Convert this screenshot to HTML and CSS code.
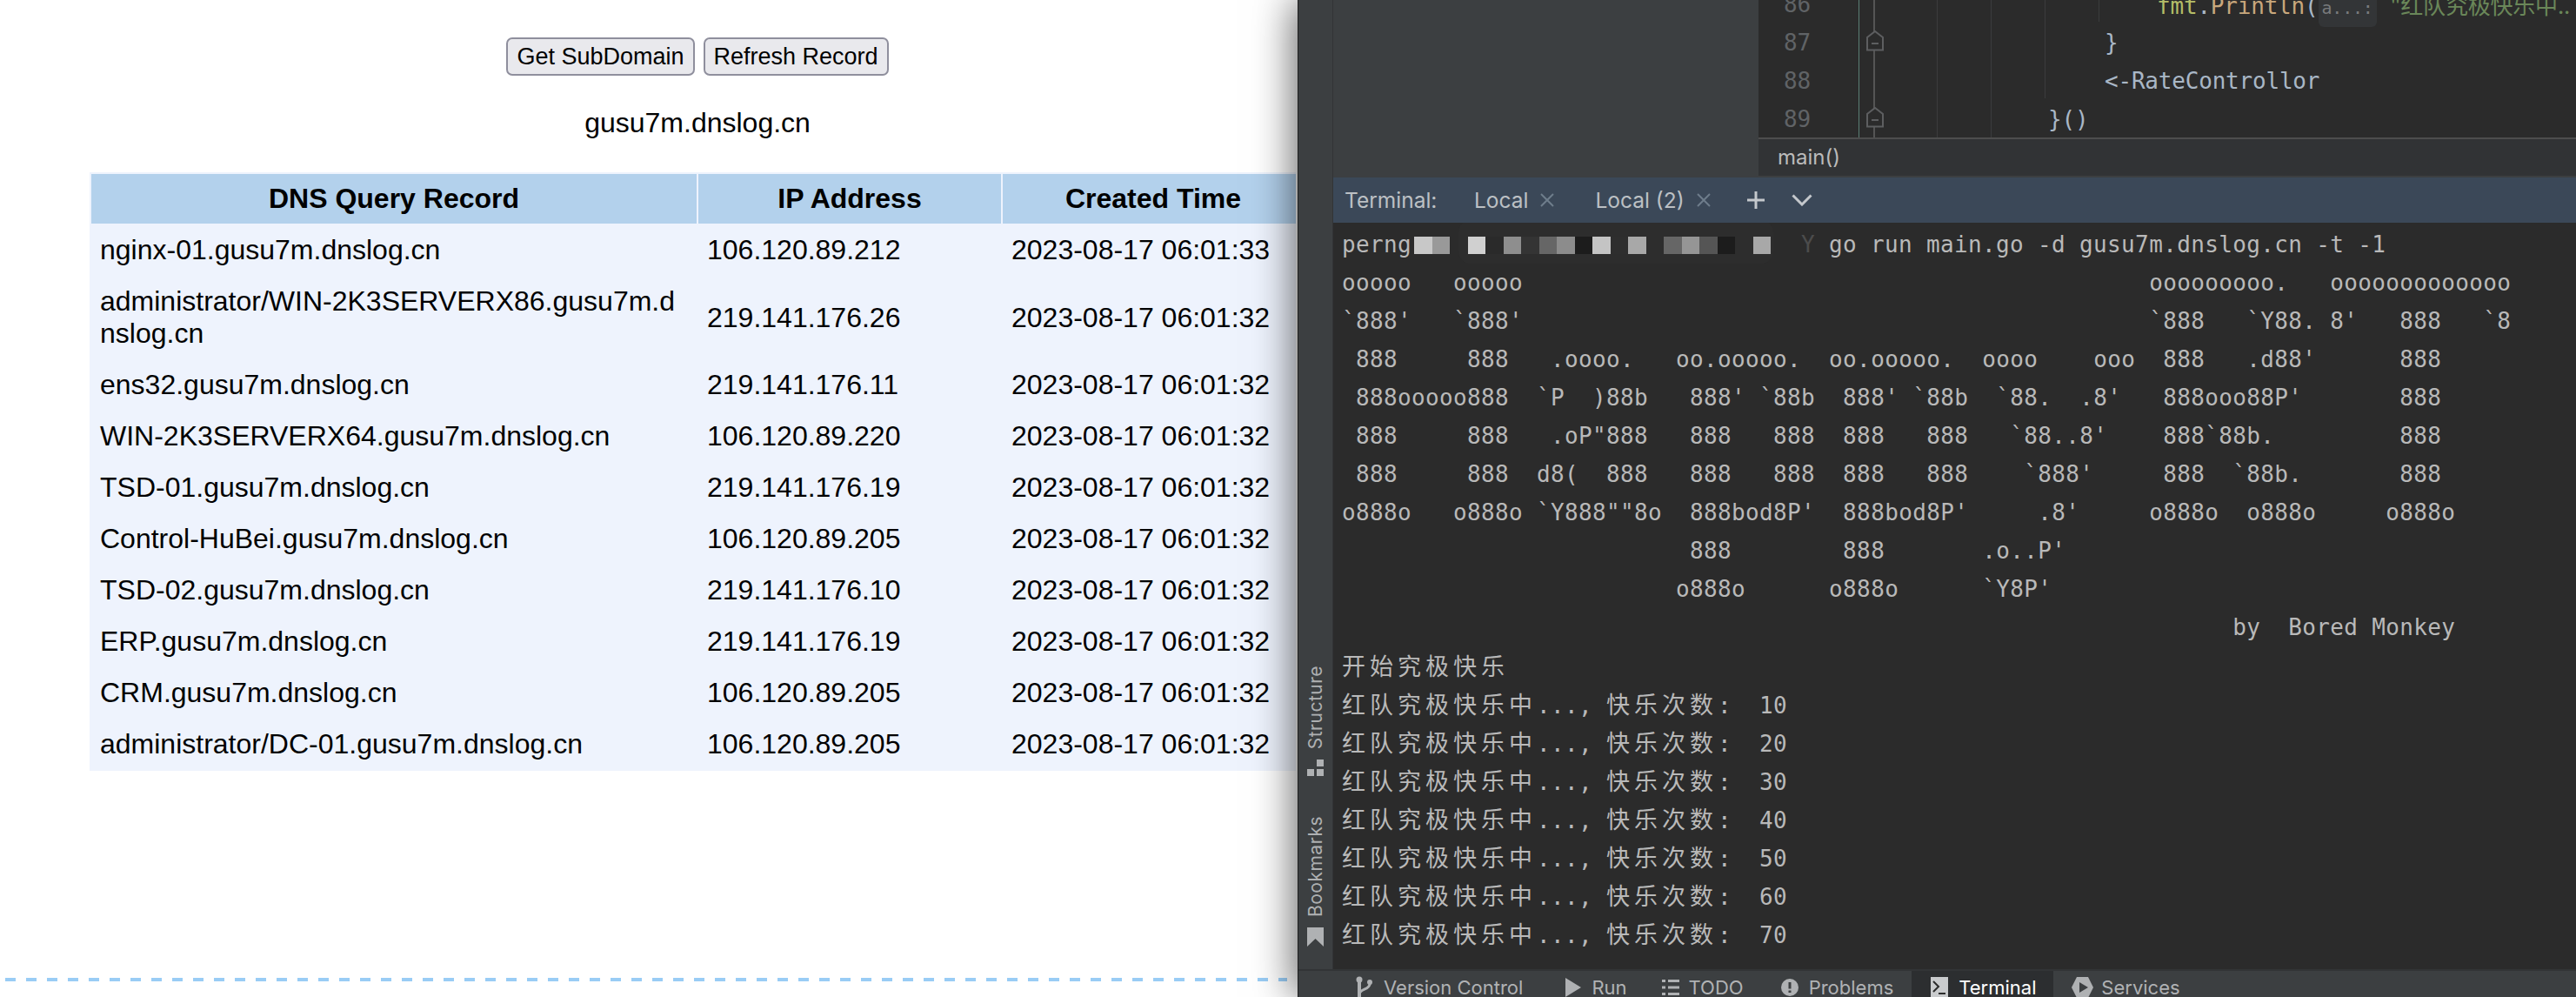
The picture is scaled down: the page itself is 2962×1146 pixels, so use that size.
FILE: index.html
```html
<!DOCTYPE html>
<html lang="en">
<head>
<meta charset="utf-8">
<title>DNSLog</title>
<link rel="stylesheet" href="styles.css">
</head>
<body>
<div class="screen">
  <main class="page">
    <div class="page-inner">
      <div class="actions">
        <button class="btn" type="button">Get SubDomain</button>
        <button class="btn" type="button">Refresh Record</button>
      </div>
      <p class="domain">gusu7m.dnslog.cn</p>
      <table class="records">
        <colgroup><col class="c1"><col class="c2"><col class="c3"></colgroup>
        <thead>
          <tr><th>DNS Query Record</th><th>IP Address</th><th>Created Time</th></tr>
        </thead>
        <tbody>
          <tr><td>nginx-01.gusu7m.dnslog.cn</td><td>106.120.89.212</td><td>2023-08-17 06:01:33</td></tr>
          <tr><td>administrator/WIN-2K3SERVERX86.gusu7m.dnslog.cn</td><td>219.141.176.26</td><td>2023-08-17 06:01:32</td></tr>
          <tr><td>ens32.gusu7m.dnslog.cn</td><td>219.141.176.11</td><td>2023-08-17 06:01:32</td></tr>
          <tr><td>WIN-2K3SERVERX64.gusu7m.dnslog.cn</td><td>106.120.89.220</td><td>2023-08-17 06:01:32</td></tr>
          <tr><td>TSD-01.gusu7m.dnslog.cn</td><td>219.141.176.19</td><td>2023-08-17 06:01:32</td></tr>
          <tr><td>Control-HuBei.gusu7m.dnslog.cn</td><td>106.120.89.205</td><td>2023-08-17 06:01:32</td></tr>
          <tr><td>TSD-02.gusu7m.dnslog.cn</td><td>219.141.176.10</td><td>2023-08-17 06:01:32</td></tr>
          <tr><td>ERP.gusu7m.dnslog.cn</td><td>219.141.176.19</td><td>2023-08-17 06:01:32</td></tr>
          <tr><td>CRM.gusu7m.dnslog.cn</td><td>106.120.89.205</td><td>2023-08-17 06:01:32</td></tr>
          <tr><td>administrator/DC-01.gusu7m.dnslog.cn</td><td>106.120.89.205</td><td>2023-08-17 06:01:32</td></tr>
        </tbody>
      </table>
    </div>
    <div class="dash"></div>
  </main>

  <section class="ide">
    <div class="ide-top">
      <aside class="strip">
        <span class="vlabel">Structure</span>
        <svg class="strip-ico" width="20" height="19" viewBox="0 0 20 19"><rect x="0" y="11" width="8" height="8" fill="#afb1b3"/><rect x="11" y="11" width="8" height="8" fill="#afb1b3"/><rect x="11" y="0" width="8" height="8" fill="#afb1b3"/></svg>
        <span class="vlabel vlabel-gap">Bookmarks</span>
        <svg class="strip-ico" width="20" height="23" viewBox="0 0 20 23"><path d="M0 0H19V22L9.500 13L0 22Z" fill="#afb1b3"/></svg>
      </aside>
      <div class="main">
        <div class="upper">
          <div class="project"></div>
          <div class="editor-col">
            <div class="editor">
              <i class="vcs"></i>
              <i class="fold-line"></i>
              <i class="guide g1"></i>
              <i class="guide g2"></i>
              <i class="guide g3"></i>
              <i class="guide g4"></i>
              <svg class="fold f1" width="20" height="24" viewBox="0 0 20 24"><path d="M1 22.500V8L10 1L19 8V22.500Z" fill="#2b2b2b" stroke="#5d5e60" stroke-width="2"/><path d="M6 15H14" stroke="#5d5e60" stroke-width="2"/></svg>
              <svg class="fold f2" width="20" height="24" viewBox="0 0 20 24"><path d="M1 22.500V8L10 1L19 8V22.500Z" fill="#2b2b2b" stroke="#5d5e60" stroke-width="2"/><path d="M6 15H14" stroke="#5d5e60" stroke-width="2"/></svg>
              <div class="code-line"><span class="ln">86</span><span class="code ind-5"><span class="fn-pkg">fmt</span>.<span class="fn-name">Println</span>(<span class="hint">a...:</span> <span class="str"><span class="cjk-code">"红队究极快乐中..</span></span></span></div>
              <div class="code-line"><span class="ln">87</span><span class="code ind-4">}</span></div>
              <div class="code-line"><span class="ln">88</span><span class="code ind-4">&lt;-RateControllor</span></div>
              <div class="code-line"><span class="ln">89</span><span class="code ind-3">}()</span></div>
            </div>
            <div class="crumb">main()</div>
          </div>
        </div>
        <header class="term-head">
          <span class="term-title">Terminal:</span>
          <span class="tab">Local</span>
          <svg class="x" width="16" height="16" viewBox="0 0 16 16"><path d="M1 1L15 15M15 1L1 15" stroke="#6e7d8b" stroke-width="2"/></svg>
          <span class="tab tab-2">Local (2)</span>
          <svg class="x" width="16" height="16" viewBox="0 0 16 16"><path d="M1 1L15 15M15 1L1 15" stroke="#6e7d8b" stroke-width="2"/></svg>
          <svg class="plus" width="20" height="20" viewBox="0 0 20 20"><path d="M10 0V20M0 10H20" stroke="#c4c8cc" stroke-width="3"/></svg>
          <svg class="chev" width="24" height="14" viewBox="0 0 24 14"><path d="M1.500 1.500L12 12L22.500 1.500" fill="none" stroke="#c4c8cc" stroke-width="3"/></svg>
        </header>
        <div class="terminal">
          <div class="smudge"></div>
          <div class="tline">perng<span class="mask"><i class="m0"></i><i class="m1"></i><i></i><i class="m2"></i><i class="m3"></i><i class="m4"></i><i class="m5"></i><i class="m6"></i><i class="m7"></i><i class="m8"></i><i class="m9"></i><i class="m11"></i><i class="m10"></i><i></i><i class="m6"></i><i class="m13"></i><i class="m14"></i><i class="m8"></i><i></i><i class="m10"></i></span><span class="dim">Y</span> go run main.go -d gusu7m.dnslog.cn -t -1</div>
          <div class="tline">ooooo   ooooo                                             ooooooooo.   ooooooooooooo</div>
          <div class="tline">`888'   `888'                                             `888   `Y88. 8'   888   `8</div>
          <div class="tline"> 888     888   .oooo.   oo.ooooo.  oo.ooooo.  oooo    ooo  888   .d88'      888</div>
          <div class="tline"> 888ooooo888  `P  )88b   888' `88b  888' `88b  `88.  .8'   888ooo88P'       888</div>
          <div class="tline"> 888     888   .oP"888   888   888  888   888   `88..8'    888`88b.         888</div>
          <div class="tline"> 888     888  d8(  888   888   888  888   888    `888'     888  `88b.       888</div>
          <div class="tline">o888o   o888o `Y888""8o  888bod8P'  888bod8P'     .8'     o888o  o888o     o888o</div>
          <div class="tline">                         888        888       .o..P'</div>
          <div class="tline">                        o888o      o888o      `Y8P'</div>
          <div class="tline">                                                                by  Bored Monkey</div>
          <div class="tline"><span class="cjk">开始究极快乐</span></div>
          <div class="tline"><span class="cjk">红队究极快乐中</span>..., <span class="cjk">快乐次数</span>:  10</div>
          <div class="tline"><span class="cjk">红队究极快乐中</span>..., <span class="cjk">快乐次数</span>:  20</div>
          <div class="tline"><span class="cjk">红队究极快乐中</span>..., <span class="cjk">快乐次数</span>:  30</div>
          <div class="tline"><span class="cjk">红队究极快乐中</span>..., <span class="cjk">快乐次数</span>:  40</div>
          <div class="tline"><span class="cjk">红队究极快乐中</span>..., <span class="cjk">快乐次数</span>:  50</div>
          <div class="tline"><span class="cjk">红队究极快乐中</span>..., <span class="cjk">快乐次数</span>:  60</div>
          <div class="tline"><span class="cjk">红队究极快乐中</span>..., <span class="cjk">快乐次数</span>:  70</div>
        </div>
      </div>
    </div>
    <footer class="bar">
      <div class="bar-item i-vc">
        <svg width="20" height="26" viewBox="0 0 20 26"><circle cx="4" cy="4" r="3.500" fill="#afb1b3"/><path d="M4 6V24" stroke="#afb1b3" stroke-width="4"/><circle cx="16" cy="7" r="3" fill="#afb1b3"/><path d="M16 9C16 15 6 15 5 19" fill="none" stroke="#afb1b3" stroke-width="3"/></svg>
        <span>Version Control</span>
      </div>
      <div class="bar-item i-run">
        <svg width="18" height="22" viewBox="0 0 18 22"><path d="M0 0L18 11L0 22Z" fill="#afb1b3"/></svg>
        <span>Run</span>
      </div>
      <div class="bar-item i-todo">
        <svg width="20" height="18" viewBox="0 0 20 18"><path d="M0 1.500H4M7 1.500H20M0 9H4M7 9H20M0 16.500H4M7 16.500H20" stroke="#afb1b3" stroke-width="3"/></svg>
        <span>TODO</span>
      </div>
      <div class="bar-item i-prob">
        <svg width="20" height="20" viewBox="0 0 20 20"><circle cx="10" cy="10" r="10" fill="#afb1b3"/><path d="M10 4V11.500M10 13.500V16" stroke="#3c3f41" stroke-width="3"/></svg>
        <span>Problems</span>
      </div>
      <div class="bar-item i-term active">
        <svg width="20" height="24" viewBox="0 0 20 24"><rect width="20" height="24" fill="#c9cbcd"/><path d="M3 5L9 11L3 17" fill="none" stroke="#2b2b2b" stroke-width="2"/><path d="M9 19H17" stroke="#2b2b2b" stroke-width="2"/></svg>
        <span>Terminal</span>
      </div>
      <div class="bar-item i-serv">
        <svg width="25" height="24" viewBox="0 0 25 24"><path d="M6 0H19L25 12L19 24H6L0 12Z" fill="#afb1b3"/><path d="M9 6L19 12L9 18Z" fill="#3c3f41"/></svg>
        <span>Services</span>
      </div>
    </footer>
  </section>
</div>
</body>
</html>
```

FILE: styles.css
```css
* { box-sizing: border-box; }
html, body { margin: 0; padding: 0; height: 100%; background: #fff; overflow: hidden; }

.screen { display: flex; width: 2962px; height: 1146px; overflow: hidden; }

/* browser page */
.page { position: relative; display: flex; flex-direction: column; width: 1490px; flex: none; overflow: hidden; font-family: "Liberation Sans", Arial, sans-serif; color: #000; }
.page-inner { width: 1604px; padding-top: 43px; display: flex; flex-direction: column; align-items: center; }
.actions { display: flex; gap: 10px; }
.btn { height: 44px; padding: 0 10px; font: 27px "Liberation Sans", Arial, sans-serif; color: #000; background: #e9e9ed; border: 2px solid #8f8f9d; border-radius: 7px; }
.domain { margin: 36px 0 0; font-size: 32px; line-height: 36px; }
.records { margin-top: 39px; width: 1398px; table-layout: fixed; border-collapse: separate; border-spacing: 2px; background: #eef3fd; font-size: 32px; }
.c1 { width: 696px; }
.c2 { width: 348px; }
.c3 { width: 346px; }
.records th { background: #b3d1ec; padding: 10px; font-weight: 700; text-align: center; }
.records td { padding: 10px; word-break: break-all; white-space: normal; }
.records td:nth-child(3) { white-space: nowrap; }
.dash { margin-top: auto; margin-bottom: 18px; margin-left: 6px; width: 1474px; height: 4px; background: repeating-linear-gradient(90deg, #99ccf5 0 12px, transparent 12px 24px); }

/* IDE window */
.ide { position: relative; flex: 1; margin-left: 2px; display: flex; flex-direction: column; background: #3c3f41; border-left: 1px solid #1f1f1f; box-shadow: -4px 0 44px rgba(0, 0, 0, .6); font-family: Inter, "Noto Sans", sans-serif; font-size: 22px; color: #b4b6b8; }
.ide-top { display: flex; height: 1114px; flex: none; }
.strip { width: 40px; flex: none; display: flex; flex-direction: column; align-items: center; justify-content: flex-end; background: #3c3f41; padding-bottom: 25px; border-right: 1px solid #323436; }
.vlabel { writing-mode: vertical-rl; transform: rotate(180deg); font-size: 21px; letter-spacing: .5px; line-height: 24px; color: #aeb0b2; }
.vlabel-gap { margin-top: 46px; }
.strip-ico { margin-top: 12px; display: block; }

.main { flex: 1; min-width: 0; display: flex; flex-direction: column; }
.upper { display: flex; height: 202px; flex: none; }
.project { width: 489px; flex: none; background: #3c3f41; }
.editor-col { flex: 1; display: flex; flex-direction: column; min-width: 0; }
.editor { position: relative; height: 160px; flex: none; background: #2b2b2b; border-bottom: 2px solid #4d4d4d; overflow: hidden; font: 26px/44px "DejaVu Sans Mono", "Noto Sans CJK SC", monospace; letter-spacing: -.2px; color: #a9b7c6; }
.code-line { display: flex; height: 44px; white-space: pre; }
.code-line:first-of-type { margin-top: -17px; }
.ln { width: 398px; flex: none; padding-left: 29px; color: #606366; }
.code { display: block; }
.ind-3 { margin-left: -65px; }
.ind-4 { margin-left: 0; }
.ind-5 { margin-left: 60px; }
.fn-pkg { color: #b5bd68; }
.fn-name { color: #c8a77c; }
.hint { display: inline-block; padding: 0 4px; font-size: 20px; line-height: 44px; color: #787a7c; background: #333537; border-radius: 6px; }
.str { color: #6a8759; }
.cjk-code { font-family: "Noto Sans CJK SC", sans-serif; }
.vcs { position: absolute; left: 115px; top: 0; bottom: 0; width: 1px; background: #5b7e74; }
.fold-line { position: absolute; left: 132px; top: 0; bottom: 0; width: 2px; background: #555; }
.guide { position: absolute; top: 0; width: 1px; background: #3b3c3d; }
.g1 { left: 205px; bottom: 0; }
.g2 { left: 267px; bottom: 0; }
.g3 { left: 329px; height: 113px; }
.g4 { left: 391px; height: 25px; }
.fold { position: absolute; left: 124px; }
.f1 { top: 35px; }
.f2 { top: 123px; }
.crumb { height: 42px; flex: none; padding-left: 22px; background: #313335; line-height: 42px; font-size: 24px; color: #bbb; }

.term-head { height: 52px; flex: none; margin-top: 2px; display: flex; align-items: center; padding-left: 13px; background: #3b4858; font-size: 24.500px; }
.term-title { width: 149px; flex: none; color: #bcc0c4; }
.tab { color: #bcc0c4; }
.x { margin-left: 14px; flex: none; }
.tab-2 { margin-left: 47px; }
.plus { margin-left: 42px; flex: none; }
.chev { margin-left: 31px; flex: none; }

.terminal { position: relative; flex: 1; min-height: 0; padding: 3px 0 0 10px; background: #2b2b2b; overflow: hidden; font: 26px/44px "DejaVu Sans Mono", "Noto Sans CJK SC", monospace; letter-spacing: .35px; color: #b9b9b9; }
.tline { position: relative; height: 44px; white-space: pre; }
.cjk { font-family: "Noto Sans CJK SC", sans-serif; font-size: 27px; letter-spacing: 5px; }
.smudge { position: absolute; left: 144px; top: -3px; width: 362px; height: 50px; background: #2d2d2d; border-radius: 14px; }
.mask { display: inline-flex; width: 448px; padding-left: 3px; vertical-align: -2px; }
.mask i { width: 20.500px; height: 20px; flex: none; }
.m0 { background: #c8c8c8; }
.m1 { background: #999; }
.m2 { background: #d0d0d0; }
.m3 { background: #2a2a2a; }
.m4 { background: #8e8e8e; }
.m5 { background: #343434; }
.m6 { background: #666; }
.m7 { background: #8c8c8c; }
.m8 { background: #1c1c1c; }
.m9 { background: #c4c4c4; }
.m10 { background: #a8a8a8; }
.m11 { background: #2e2e2e; }
.m13 { background: #959595; }
.m14 { background: #555; }
.dim { color: #4c4c4c; }

/* bottom tool bar */
.bar { position: relative; flex: 1; min-height: 0; display: flex; align-items: flex-start; padding-left: 66px; background: #3c3f41; border-top: 2px solid #323436; }
.bar-item { display: flex; align-items: center; gap: 12px; height: 30px; padding-top: 8px; flex: none; white-space: nowrap; line-height: 20px; color: #b0b2b4; }
.bar-item svg { flex: none; }
.i-run { margin-left: 49px; }
.i-todo { margin-left: 40px; gap: 11px; }
.i-prob { margin-left: 43px; }
.i-term { margin-left: 21px; width: 163px; padding-left: 22px; }
.active { background: #2c2e30; color: #fff; }
.i-serv { margin-left: 21px; gap: 9px; }
```
